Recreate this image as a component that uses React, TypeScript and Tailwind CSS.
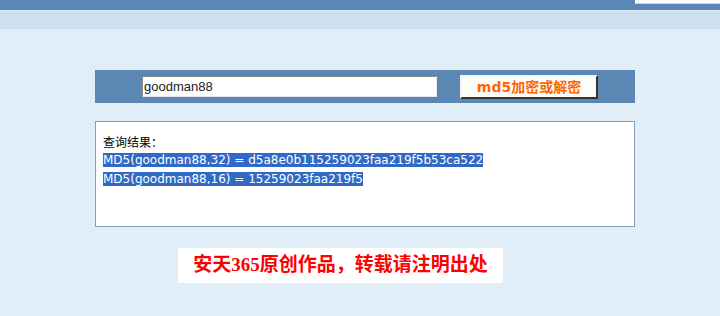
import React, { useState } from "react";

const CJK = "'Noto Sans CJK SC', sans-serif";

function TopBars() {
  return (
    <>
      <div className="flex h-[10px] justify-end bg-[#5b87b4]">
        <div className="h-[4px] w-[85px] border-b border-[#c9d3dc] bg-white" />
      </div>
      <div className="h-[19px] border-t-2 border-[#d7e7f3] bg-[#cce0ee]" />
    </>
  );
}

export default function App() {
  const [word, setWord] = useState("goodman88");

  return (
    <div className="min-h-[316px] bg-[#e1edf7]">
      <TopBars />

      <div className="ml-[95px] w-[540px] pt-[41px]">
        {/* input bar */}
        <div className="flex h-[33px] items-center bg-[#5b87b4] pl-[47px]">
          <input
            value={word}
            onChange={(e) => setWord(e.target.value)}
            className="h-[21px] w-[295px] border border-t-[#8a8a8a] border-l-[#8a8a8a] border-r-[#e8e8e8] border-b-[#e8e8e8] bg-white px-[1px] text-[13px] text-[#222] outline-none"
            style={{ fontFamily: "'Liberation Sans', Arial, sans-serif" }}
          />
          <button
            className="ml-[23px] h-[24px] w-[138px] border-2 border-t-[#f4f4f4] border-l-[#f4f4f4] border-r-[#333] border-b-[#333] bg-[#fdfcf8] text-[14px] font-bold text-[#ff6600]"
            style={{ fontFamily: "'DejaVu Sans', 'Noto Sans CJK SC', sans-serif" }}
          >
            md5加密或解密
          </button>
        </div>

        {/* result */}
        <div
          className="mt-[18px] h-[106px] border border-[#7f9db9] bg-white pl-[7px] pt-[10px] text-[12px] leading-[19px] text-black"
          style={{ fontFamily: "'DejaVu Sans', 'Noto Sans CJK SC', sans-serif" }}
        >
          <div style={{ fontFamily: CJK }}>查询结果：</div>
          <div>
            <span className="bg-[#316ac5] text-white">
              MD5(goodman88,32) = d5a8e0b115259023faa219f5b53ca522
            </span>
          </div>
          <div>
            <span className="bg-[#316ac5] text-white">
              MD5(goodman88,16) = 15259023faa219f5
            </span>
          </div>
        </div>

        {/* notice */}
        <div className="ml-[83px] mt-[21px] flex h-[35px] w-[325px] items-center justify-center bg-white">
          <span
            className="text-[19px] font-bold text-[#ff0000]"
            style={{ fontFamily: "'Liberation Serif', 'Noto Sans CJK SC', serif" }}
          >
            安天365原创作品，转载请注明出处
          </span>
        </div>
      </div>
    </div>
  );
}
